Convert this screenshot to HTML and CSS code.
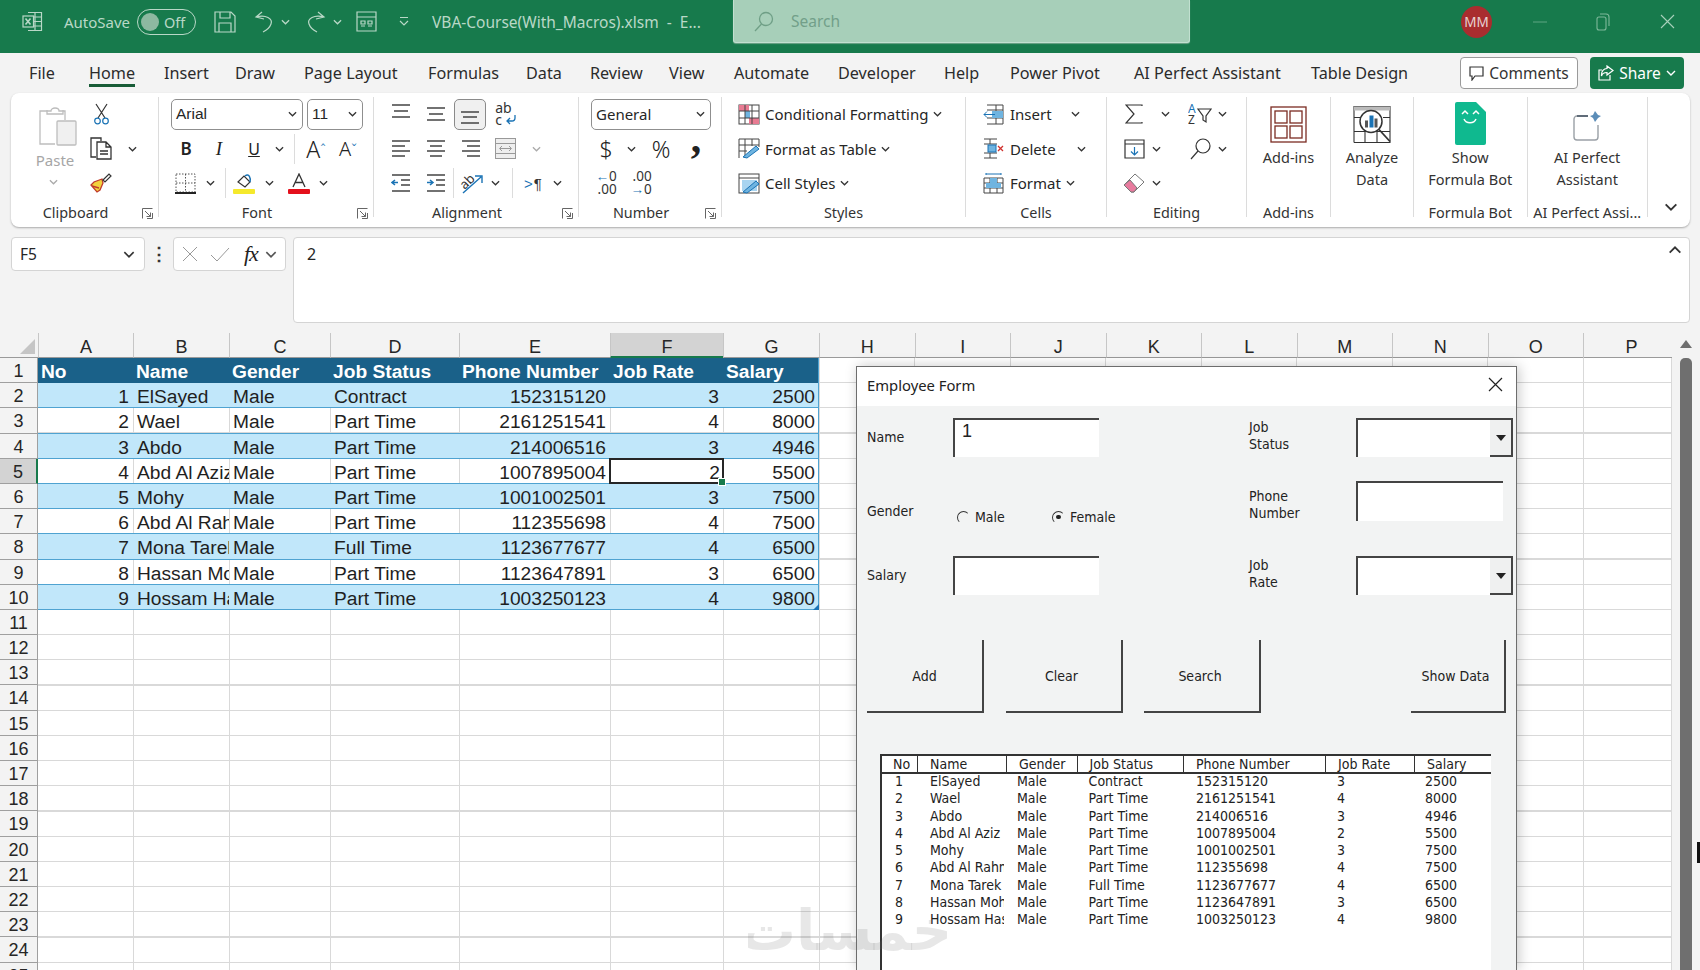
FILE: index.html
```html
<!DOCTYPE html>
<html lang="en">
<head>
<meta charset="utf-8">
<title>VBA-Course(With_Macros).xlsm - Excel</title>
<link rel="stylesheet" href="styles.css">
</head>
<body>
<svg class="defs" aria-hidden="true">
  <symbol id="chev" viewBox="0 0 10 6"><path d="M1 1l4 4 4-4" fill="none" stroke="currentColor" stroke-width="1.4"/></symbol>
  <symbol id="launch" viewBox="0 0 11 11"><path d="M.5 10.5v-10h10M4 .5M10.5 5v5.5H5M3 3l5.5 5.5M8.5 4.5v4h-4" fill="none" stroke="#666" stroke-width="1"/></symbol>
</svg>

<header class="titlebar">
  <svg class="t-ico" width="21" height="21" viewBox="0 0 21 21" fill="none" stroke="#b9d8c7" stroke-width="1.2"><path d="M6 1.5h13.5v18H6M6 6h13.5M6 10.5h13.5M6 15h13.5M13 1.5v18"/><rect x="1" y="5" width="10.500" height="11" fill="#177a4c"/><path d="M3.500 7.500l5 6M8.500 7.500l-5 6" stroke-width="1.600"/></svg>
  <span class="t-text autosave">AutoSave</span>
  <span class="toggle"><i class="knob"></i><span>Off</span></span>
  <svg width="22" height="22" viewBox="0 0 22 22" fill="none" stroke="#b9d8c7" stroke-width="1.200"><path d="M1 1h16l4 4v16H1zM6 1v6h10V1M5 21v-9h12v9"/></svg>
  <svg width="21" height="22" viewBox="0 0 21 22" fill="none" stroke="#b9d8c7" stroke-width="1.200"><path d="M8 1L2 6l8 2M2 6c10-3 17 2 15 7-1 3-4 6-8 8"/></svg>
  <svg class="t-chev"><use href="#chev"/></svg>
  <svg width="21" height="22" viewBox="0 0 21 22" fill="none" stroke="#b9d8c7" stroke-width="1.200"><path d="M13 1l6 5-8 2M19 6C9 3 2 8 4 13c1 3 4 6 8 8"/></svg>
  <svg class="t-chev"><use href="#chev"/></svg>
  <svg width="21" height="21" viewBox="0 0 21 21" fill="none" stroke="#b9d8c7" stroke-width="1.200"><path d="M1 1h19v19H1zM1 6h19M5 10h4v3H5zM12 10h4v3h-4zM5 15h4M12 15h4"/></svg>
  <svg class="t-qat" width="10" height="11" viewBox="0 0 10 11" fill="none" stroke="#b9d8c7" stroke-width="1.200"><path d="M1 1.500h8M1 5l4 4 4-4"/></svg>
  <span class="t-text">VBA-Course(With_Macros).xlsm &nbsp;-&nbsp; E...</span>
  <div class="searchbox">
    <svg width="20" height="21" viewBox="0 0 20 21" fill="none" stroke="#6f9f86" stroke-width="1.300"><circle cx="12" cy="8" r="6.500"/><path d="M7.500 13L1 20"/></svg>
    <span>Search</span>
  </div>
  <span class="avatar">MM</span>
  <svg width="14" height="2" viewBox="0 0 14 2"><path d="M0 1h14" stroke="#5fa582"/></svg>
  <svg width="14" height="20" viewBox="0 0 14 20" fill="none" stroke="#7fb89a" stroke-width="1.100"><rect x="1" y="5" width="9" height="13" rx="2"/><path d="M4 2h6a3 3 0 0 1 3 3v9"/></svg>
  <svg width="15" height="15" viewBox="0 0 15 15" fill="none" stroke="#a9d0bb" stroke-width="1.100"><path d="M1 1l13 13M14 1L1 14"/></svg>
</header>

<nav class="tabrow">
  <div class="tabs">
    <span class="tab">File</span><span class="tab active">Home</span><span class="tab">Insert</span><span class="tab">Draw</span><span class="tab">Page Layout</span><span class="tab">Formulas</span><span class="tab">Data</span><span class="tab">Review</span><span class="tab">View</span><span class="tab">Automate</span><span class="tab">Developer</span><span class="tab">Help</span><span class="tab">Power Pivot</span><span class="tab">AI Perfect Assistant</span><span class="tab">Table Design</span>
  </div>
  <div class="tab-actions">
    <button class="btn-comments"><svg width="15" height="15" viewBox="0 0 15 15" fill="none" stroke="#333" stroke-width="1.200"><path d="M1 1h13v9H6l-3 4v-4H1z"/></svg>Comments</button>
    <button class="btn-share"><svg width="16" height="16" viewBox="0 0 16 16" fill="none" stroke="#fff" stroke-width="1.200"><path d="M9 1l6 4.500L9 10V7.500C5 7.500 4 9 3.500 11 3 6 6 3.500 9 3.500zM12 10v5H1V5h3"/></svg>Share<svg class="chev" width="10" height="6"><use href="#chev"/></svg></button>
  </div>
</nav>

<section class="ribbon">
  <!-- Clipboard -->
  <div class="group g-clip">
    <div class="body clip-body">
      <div class="paste">
        <svg width="38" height="40" viewBox="0 0 38 40" fill="none" stroke="#bdbdbd" stroke-width="1.300"><path d="M6 5h6c0-4 8-4 8 0h6v9M16 38H1V5h5"/><path d="M8 4v4h16V4" /><rect x="18" y="15" width="19" height="24" rx="1" fill="#f0f0f0"/></svg>
        <span class="paste-label">Paste</span>
        <svg class="chev light" width="9" height="6"><use href="#chev"/></svg>
      </div>
      <div class="clip-tools">
        <div class="row"><span class="c w28"><svg width="15" height="22" viewBox="0 0 15 22" fill="none" stroke="#333" stroke-width="1.200"><path d="M2 1l9 14M13 1L4 15"/><circle cx="3.500" cy="18" r="2.800" stroke="#1a73b5"/><circle cx="11.500" cy="18" r="2.800" stroke="#1a73b5"/></svg></span></div>
        <div class="row"><span class="c w28"><svg width="24" height="23" viewBox="0 0 24 23" fill="none" stroke="#333" stroke-width="1.300"><path d="M7 20H2V1h10v3"/><path d="M8 5h9l5 5v12H8zM17 5v5h5M11 14h8M11 17h8"/></svg></span><span class="c w34"><svg class="chev" width="9" height="6"><use href="#chev"/></svg></span></div>
        <div class="row"><span class="c w28"><svg width="22" height="20" viewBox="0 0 22 20"><path d="M12 6L4 9l-3 3 6 7 3-2 3-7z" fill="#f2d23c" stroke="#c0392b" stroke-width="1.300"/><path d="M2 13l7 2" stroke="#c0392b" stroke-width="1.500"/><path d="M13 7l6-6 2 2-6 6z" fill="#fff" stroke="#333" stroke-width="1.200"/></svg></span></div>
      </div>
    </div>
    <div class="label has-launch">Clipboard<svg class="launch" width="11" height="11"><use href="#launch"/></svg></div>
  </div>

  <!-- Font -->
  <div class="group g-font">
    <div class="body pad12">
      <div class="row gap4">
        <span class="select w132"><span class="arial">Arial</span><svg class="chev" width="9" height="6"><use href="#chev"/></svg></span>
        <span class="select w56"><span class="arial">11</span><svg class="chev" width="9" height="6"><use href="#chev"/></svg></span>
      </div>
      <div class="row">
        <span class="c w30 glyph bold">B</span>
        <span class="c w36 glyph ital">I</span>
        <span class="c w34 glyph under">U</span>
        <span class="c w16"><svg class="chev" width="9" height="6"><use href="#chev"/></svg></span>
        <span class="c w14"><i class="vsep"></i></span>
        <span class="c w30 glyph big">A<sup class="up">&#710;</sup></span>
        <span class="c w34 glyph mid">A<sup class="up">&#711;</sup></span>
      </div>
      <div class="row">
        <span class="c w28"><svg width="21" height="21" viewBox="0 0 21 21" fill="none" stroke="#555" stroke-width="1" stroke-dasharray="1.500 1.500"><path d="M1 1h19v18H1zM10.500 1v18M1 10h19"/><path d="M0 20h21" stroke="#222" stroke-width="2" stroke-dasharray="none"/></svg></span>
        <span class="c w22"><svg class="chev" width="9" height="6"><use href="#chev"/></svg></span>
        <span class="c w8"><i class="vsep"></i></span>
        <span class="c w30"><svg width="22" height="21" viewBox="0 0 22 21" fill="none"><path d="M5 9l6-6 6 6-5 5z" stroke="#333" stroke-width="1.200"/><path d="M12 3c4-3 6 2 5 6" stroke="#1a73b5" stroke-width="1.500"/><rect y="16" width="22" height="5" rx="1" fill="#f5e92c"/></svg></span>
        <span class="c w20"><svg class="chev" width="9" height="6"><use href="#chev"/></svg></span>
        <span class="c w40"><svg width="22" height="21" viewBox="0 0 22 21" fill="none"><path d="M5 14L11 1l6 13M7 9.500h8" stroke="#333" stroke-width="1.300"/><rect y="16" width="22" height="5" rx="1" fill="#e4101c"/></svg></span>
        <span class="c w8"><svg class="chev" width="9" height="6"><use href="#chev"/></svg></span>
      </div>
    </div>
    <div class="label has-launch">Font<svg class="launch" width="11" height="11"><use href="#launch"/></svg></div>
  </div>

  <!-- Alignment -->
  <div class="group g-align">
    <div class="body pad9">
      <div class="row">
        <span class="c w35"><svg class="lines" width="20" height="22" viewBox="0 0 20 22"><path d="M1 2h18M3 8h14M1 14h18"/></svg></span>
        <span class="c w35"><svg class="lines" width="20" height="22" viewBox="0 0 20 22"><path d="M1 5h18M3 11h14M1 17h18"/></svg></span>
        <span class="c w34"><span class="selected"><svg class="lines" width="20" height="22" viewBox="0 0 20 22"><path d="M1 9h18M3 14h14M1 20h18"/></svg></span></span>
        <span class="c w38 wrapglyph"><span>ab<br>c</span><svg width="11" height="11" viewBox="0 0 11 11" fill="none" stroke="#1a73b5" stroke-width="1.300"><path d="M9 1v3a3 3 0 0 1-3 3H1M4 4L1 7l3 3"/></svg></span>
      </div>
      <div class="row">
        <span class="c w35"><svg class="lines" width="20" height="20" viewBox="0 0 20 20"><path d="M1 2h18M1 7h13M1 12h18M1 17h13"/></svg></span>
        <span class="c w35"><svg class="lines" width="20" height="20" viewBox="0 0 20 20"><path d="M1 2h18M4 7h12M1 12h18M4 17h12"/></svg></span>
        <span class="c w35"><svg class="lines" width="20" height="20" viewBox="0 0 20 20"><path d="M1 2h18M6 7h13M1 12h18M6 17h13"/></svg></span>
        <span class="c w34"><svg width="21" height="21" viewBox="0 0 21 21" fill="#eee" stroke="#999"><rect x=".500" y=".500" width="20" height="20"/><path d="M.500 5.500h20M.500 15.500h20M5 10.500h11M7 8l-2.500 2.500L7 13M14 8l2.500 2.500L14 13" fill="none"/></svg></span>
        <span class="c w28"><svg class="chev light" width="9" height="6"><use href="#chev"/></svg></span>
      </div>
      <div class="row">
        <span class="c w35"><svg class="lines" width="20" height="20" viewBox="0 0 20 20"><path d="M1 2h18M10 7h9M10 12h9M1 18h18"/><path d="M7 9.500H1M4 7L1 9.500 4 12" stroke="#1a73b5"/></svg></span>
        <span class="c w35"><svg class="lines" width="20" height="20" viewBox="0 0 20 20"><path d="M1 2h18M10 7h9M10 12h9M1 18h18"/><path d="M1 9.500h6M4 7l3 2.500L4 12" stroke="#1a73b5"/></svg></span>
        <i class="vsep"></i>
        <span class="c w36"><svg width="24" height="24" viewBox="0 0 24 24" fill="none"><text class="svgab" transform="rotate(-45 9 12)" x="1" y="14">ab</text><path d="M3 22L21 6M15 5h7v7" stroke="#1a73b5" stroke-width="1.400"/></svg></span>
        <span class="c w10"><svg class="chev" width="9" height="6"><use href="#chev"/></svg></span>
        <span class="c w12"></span><i class="vsep"></i>
        <span class="c w40 rtl"><b>&gt;</b>&para;</span>
        <span class="c w8"><svg class="chev" width="9" height="6"><use href="#chev"/></svg></span>
      </div>
    </div>
    <div class="label has-launch">Alignment<svg class="launch" width="11" height="11"><use href="#launch"/></svg></div>
  </div>

  <!-- Number -->
  <div class="group g-number">
    <div class="body pad12">
      <div class="row"><span class="select w120"><span>General</span><svg class="chev" width="9" height="6"><use href="#chev"/></svg></span></div>
      <div class="row">
        <span class="c w30 glyph big2">$</span>
        <span class="c w20"><svg class="chev" width="9" height="6"><use href="#chev"/></svg></span>
        <span class="c w40 glyph big2">%</span>
        <span class="c w30 glyph comma">,</span>
      </div>
      <div class="row">
        <span class="c w30 decim"><span><b>&larr;</b>0<br>.00</span></span>
        <span class="c w40 decim"><span>.00<br><b>&rarr;</b>0</span></span>
      </div>
    </div>
    <div class="label has-launch">Number<svg class="launch" width="11" height="11"><use href="#launch"/></svg></div>
  </div>

  <!-- Styles -->
  <div class="group g-styles">
    <div class="body pad16">
      <div class="row gap5">
        <svg width="22" height="21" viewBox="0 0 22 21" fill="none" stroke="#444"><rect x="1" y="1" width="20" height="19"/><rect x="1" y="1" width="10" height="6" fill="#e87b92" stroke="none"/><rect x="11" y="14" width="10" height="6" fill="#e87b92" stroke="none"/><rect x="7" y="7" width="5" height="7" fill="#6fb4e0" stroke="none"/><path d="M1 7h20M1 14h20M7 1v19M14 1v19"/></svg>
        <span>Conditional Formatting</span><svg class="chev" width="9" height="6"><use href="#chev"/></svg>
      </div>
      <div class="row gap5">
        <svg width="22" height="21" viewBox="0 0 22 21" fill="none" stroke="#444"><path d="M1 20V1h20v8M1 7h20M1 13h8M7 1v19M14 1v7"/><path d="M5 19L18 8l3 3L9 20z" fill="#6fb4e0" stroke="#1a73b5"/></svg>
        <span>Format as Table</span><svg class="chev" width="9" height="6"><use href="#chev"/></svg>
      </div>
      <div class="row gap5">
        <svg width="22" height="21" viewBox="0 0 22 21" fill="none" stroke="#444"><rect x="1" y="1" width="20" height="19"/><path d="M1 5h20"/><rect x="4" y="7" width="15" height="11" fill="#a8d4f0" stroke="none"/><path d="M5 19L18 8l3 3L9 20z" fill="#6fb4e0" stroke="#1a73b5"/></svg>
        <span>Cell Styles</span><svg class="chev" width="9" height="6"><use href="#chev"/></svg>
      </div>
    </div>
    <div class="label">Styles</div>
  </div>

  <!-- Cells -->
  <div class="group g-cells">
    <div class="body pad17">
      <div class="row gap6">
        <svg width="21" height="21" viewBox="0 0 21 21" fill="none" stroke="#444"><path d="M4 1h16v19H4M4 6h16M4 14h16M13 1v19"/><rect x="9" y="7" width="11" height="7" fill="#6fb4e0" stroke="none"/><path d="M12 10.500H1M4 7.500l-3 3 3 3" stroke="#1a73b5"/></svg>
        <span class="w52">Insert</span><span class="c w14"><svg class="chev" width="9" height="6"><use href="#chev"/></svg></span>
      </div>
      <div class="row gap6">
        <svg width="21" height="21" viewBox="0 0 21 21" fill="none" stroke="#444"><path d="M1 1h13M1 6h13M1 15h13M1 20h13M7 1v5M7 15v5"/><rect x="5" y="7" width="8" height="7" fill="#6fb4e0" stroke="#1a73b5"/><path d="M15 8l5 5M20 8l-5 5" stroke="#d0312d" stroke-width="1.300"/></svg>
        <span class="w58">Delete</span><span class="c w14"><svg class="chev" width="9" height="6"><use href="#chev"/></svg></span>
      </div>
      <div class="row gap5">
        <svg class="ml-cell" width="21" height="22" viewBox="0 0 21 22" fill="none" stroke="#444"><path d="M1 6h19v15H1zM1 11h19M1 16h19M7 6v15M14 6v15"/><rect x="7" y="6" width="7" height="10" fill="#6fb4e0" stroke="none"/><rect x="3" y="11" width="15" height="5" fill="#6fb4e0" stroke="none"/><path d="M3 2h15M3 1v2M18 1v2" stroke="#1a73b5"/></svg>
        <span>Format</span><svg class="chev" width="9" height="6"><use href="#chev"/></svg>
      </div>
    </div>
    <div class="label">Cells</div>
  </div>

  <!-- Editing -->
  <div class="group g-edit">
    <div class="body pad15">
      <div class="row">
        <span class="c w24"><svg width="18" height="20" viewBox="0 0 18 20" fill="none" stroke="#333" stroke-width="1.200"><path d="M17 2V1H1l8 9-8 9h16v-1"/></svg></span>
        <span class="c w38"><svg class="chev" width="9" height="6"><use href="#chev"/></svg></span>
        <span class="c w32"><svg width="24" height="22" viewBox="0 0 24 22" fill="none"><text class="svgaz blue" x="0" y="10">A</text><text class="svgaz" x="0" y="21">Z</text><path d="M10 6h13l-5 7v6l-3-2v-4z" stroke="#333" stroke-width="1.200"/></svg></span>
        <span class="c w12"><svg class="chev" width="9" height="6"><use href="#chev"/></svg></span>
      </div>
      <div class="row">
        <span class="c w24"><svg width="21" height="20" viewBox="0 0 21 20" fill="none" stroke="#333" stroke-width="1.200"><path d="M1 1h19v18H1zM1 5h19"/><path d="M10.500 8v8M7 12.500l3.500 3.500 3.500-3.500" stroke="#1a73b5"/></svg></span>
        <span class="c w20"><svg class="chev" width="9" height="6"><use href="#chev"/></svg></span>
        <span class="c w18"></span>
        <span class="c w32"><svg width="21" height="22" viewBox="0 0 21 22" fill="none" stroke="#333" stroke-width="1.200"><circle cx="13" cy="8" r="7"/><path d="M8 13l-7 8"/></svg></span>
        <span class="c w12"><svg class="chev" width="9" height="6"><use href="#chev"/></svg></span>
      </div>
      <div class="row">
        <span class="c w24"><svg width="22" height="20" viewBox="0 0 22 20"><path d="M1 12L12 1l9 8-10 10h-3z" fill="#fff" stroke="#777"/><path d="M1 12l7 7h3l3-4-7-8z" fill="#e87b9e" stroke="#777"/></svg></span>
        <span class="c w20"><svg class="chev" width="9" height="6"><use href="#chev"/></svg></span>
      </div>
    </div>
    <div class="label">Editing</div>
  </div>

  <!-- Large buttons -->
  <div class="group g-addins">
    <div class="body big-btn">
      <svg width="37" height="37" viewBox="0 0 37 37" fill="none" stroke="#7b2c22" stroke-width="1.300"><rect x="1" y="1" width="35" height="35"/><rect x="5" y="5" width="12" height="12"/><rect x="20" y="5" width="12" height="12"/><rect x="5" y="20" width="12" height="12"/><rect x="20" y="20" width="12" height="12"/></svg>
      <span class="big-text">Add-ins</span>
    </div>
    <div class="label">Add-ins</div>
  </div>
  <div class="group g-analyze">
    <div class="body big-btn">
      <svg width="38" height="38" viewBox="0 0 38 38" fill="none" stroke="#333" stroke-width="1.100"><path d="M1 37V1h36v36H1M1 4h36M1 12h7M30 12h7M1 26h36M12 26v11M24 26v11" /><rect x="1" y="1" width="36" height="4" fill="#bbb" stroke="none"/><circle cx="18" cy="16" r="11" fill="#fff" stroke-width="1.500"/><path d="M26 24l11 12" stroke-width="1.800"/><rect x="12" y="15" width="3" height="7" fill="#555" stroke="none"/><rect x="16.500" y="10" width="4" height="12" fill="#1a73b5" stroke="none"/><rect x="21.500" y="13" width="3" height="9" fill="#555" stroke="none"/></svg>
      <span class="big-text">Analyze<br>Data</span>
    </div>
  </div>
  <div class="group g-bot">
    <div class="body big-btn top-tight">
      <svg width="31" height="43" viewBox="0 0 31 43"><path d="M2 0h19l10 10v31a2 2 0 0 1-2 2H2a2 2 0 0 1-2-2V2a2 2 0 0 1 2-2z" fill="#0fb98f"/><path d="M7 12l3-3 3 3M18 12l3-3 3 3M9 17c2 5 10 5 12 0" fill="none" stroke="#fff" stroke-width="1.500"/></svg>
      <span class="big-text">Show<br>Formula Bot</span>
    </div>
    <div class="label">Formula Bot</div>
  </div>
  <div class="group g-ai">
    <div class="body big-btn">
      <svg width="28" height="37" viewBox="0 0 28 37" fill="none"><path d="M15 10H4a3 3 0 0 0-3 3v18a3 3 0 0 0 3 3h18a3 3 0 0 0 3-3V19" stroke="#9aa0a6" stroke-width="1.400"/><path d="M4 10h11" stroke="#3d4d5c" stroke-width="1.400"/><path d="M22 5l3 4 3 1-3 2-3 4-2-4-3-2 3-1z" fill="#5b8db8"/></svg>
      <span class="big-text">AI Perfect<br>Assistant</span>
    </div>
    <div class="label">AI Perfect Assi...</div>
  </div>
  <div class="collapse"><svg width="14" height="8"><use href="#chev"/></svg></div>
</section>

<section class="fbar">
  <div class="namebox"><span>F5</span><svg class="chev" width="12" height="7"><use href="#chev"/></svg></div>
  <div class="dots">&#8942;</div>
  <div class="fxbox">
    <svg width="16" height="16" viewBox="0 0 16 16" fill="none" stroke="#999" stroke-width="1"><path d="M1 1l14 14M15 1L1 15"/></svg>
    <svg width="20" height="15" viewBox="0 0 20 15" fill="none" stroke="#999" stroke-width="1"><path d="M1 8l6 6L19 1"/></svg>
    <span class="fx">fx</span>
    <svg class="chev" width="12" height="7"><use href="#chev"/></svg>
  </div>
  <div class="finput"><span>2</span><svg class="chev-up" width="14" height="8"><use href="#chev"/></svg></div>
</section>

<section class="sheet">
  <div class="colheads">
    <div class="corner"><i></i></div>
    <div class="ch">A</div><div class="ch">B</div><div class="ch">C</div><div class="ch">D</div><div class="ch">E</div><div class="ch sel">F</div><div class="ch">G</div><div class="ch">H</div><div class="ch">I</div><div class="ch">J</div><div class="ch">K</div><div class="ch">L</div><div class="ch">M</div><div class="ch">N</div><div class="ch">O</div><div class="ch last">P</div>
  </div>
  <div class="sheet-body">
    <div class="rowheads">
      <div>1</div><div>2</div><div>3</div><div>4</div><div class="sel">5</div><div>6</div><div>7</div><div>8</div><div>9</div><div>10</div><div>11</div><div>12</div><div>13</div><div>14</div><div>15</div><div>16</div><div>17</div><div>18</div><div>19</div><div>20</div><div>21</div><div>22</div><div>23</div><div>24</div><div>25</div>
    </div>
    <div class="grid">
      <div class="tr th"><span>No</span><span>Name</span><span>Gender</span><span>Job Status</span><span>Phone Number</span><span>Job Rate</span><span>Salary</span></div>
      <div class="tr band"><span class="n">1</span><span>ElSayed</span><span>Male</span><span>Contract</span><span class="n">152315120</span><span class="n">3</span><span class="n">2500</span></div>
      <div class="tr"><span class="n">2</span><span>Wael</span><span>Male</span><span>Part Time</span><span class="n">2161251541</span><span class="n">4</span><span class="n">8000</span></div>
      <div class="tr band"><span class="n">3</span><span>Abdo</span><span>Male</span><span>Part Time</span><span class="n">214006516</span><span class="n">3</span><span class="n">4946</span></div>
      <div class="tr"><span class="n">4</span><span>Abd Al Aziz</span><span>Male</span><span>Part Time</span><span class="n">1007895004</span><span class="n active">2</span><span class="n">5500</span></div>
      <div class="tr band"><span class="n">5</span><span>Mohy</span><span>Male</span><span>Part Time</span><span class="n">1001002501</span><span class="n">3</span><span class="n">7500</span></div>
      <div class="tr"><span class="n">6</span><span>Abd Al Rahman</span><span>Male</span><span>Part Time</span><span class="n">112355698</span><span class="n">4</span><span class="n">7500</span></div>
      <div class="tr band"><span class="n">7</span><span>Mona Tarek</span><span>Male</span><span>Full Time</span><span class="n">1123677677</span><span class="n">4</span><span class="n">6500</span></div>
      <div class="tr"><span class="n">8</span><span>Hassan Mohamed</span><span>Male</span><span>Part Time</span><span class="n">1123647891</span><span class="n">3</span><span class="n">6500</span></div>
      <div class="tr band end"><span class="n">9</span><span>Hossam Hassan</span><span>Male</span><span>Part Time</span><span class="n">1003250123</span><span class="n">4</span><span class="n">9800</span></div>
    </div>
    <div class="vscroll"><i class="thumb"></i></div>
  </div>
</section>

<aside class="dialog">
  <div class="dlg-title"><span>Employee Form</span><svg width="15" height="15" viewBox="0 0 15 15" fill="none" stroke="#222" stroke-width="1.200"><path d="M1 1l13 13M14 1L1 14"/></svg></div>
  <div class="dlg-body">
    <div class="form">
      <label class="f-label">Name</label>
      <div class="inp name-inp">1</div>
      <div></div>
      <label class="f-label two">Job<br>Status</label>
      <div class="inp combo"><span class="drop"><i></i></span></div>

      <label class="f-label low">Gender</label>
      <div class="radios">
        <span class="radio"><i class="dot"></i>Male</span>
        <span class="radio"><i class="dot on"></i>Female</span>
      </div>
      <label class="f-label ph">Phone<br>Number</label>
      <div class="inp narrow"></div>

      <label class="f-label">Salary</label>
      <div class="inp"></div>
      <div></div>
      <label class="f-label jr">Job<br>Rate</label>
      <div class="inp combo"><span class="drop"><i></i></span></div>
    </div>
    <div class="actions">
      <button class="vb w117">Add</button>
      <button class="vb w117 tweak">Clear</button>
      <button class="vb w117 tweak">Search</button>
      <button class="vb w95 tweak">Show Data</button>
    </div>
    <div class="listbox">
      <div class="lb-head"><span>No</span><span>Name</span><span>Gender</span><span>Job Status</span><span>Phone Number</span><span>Job Rate</span><span>Salary</span></div>
      <div class="lb-row"><span>1</span><span>ElSayed</span><span>Male</span><span>Contract</span><span>152315120</span><span>3</span><span>2500</span></div>
      <div class="lb-row"><span>2</span><span>Wael</span><span>Male</span><span>Part Time</span><span>2161251541</span><span>4</span><span>8000</span></div>
      <div class="lb-row"><span>3</span><span>Abdo</span><span>Male</span><span>Part Time</span><span>214006516</span><span>3</span><span>4946</span></div>
      <div class="lb-row"><span>4</span><span>Abd Al Aziz</span><span>Male</span><span>Part Time</span><span>1007895004</span><span>2</span><span>5500</span></div>
      <div class="lb-row"><span>5</span><span>Mohy</span><span>Male</span><span>Part Time</span><span>1001002501</span><span>3</span><span>7500</span></div>
      <div class="lb-row"><span>6</span><span>Abd Al Rahman</span><span>Male</span><span>Part Time</span><span>112355698</span><span>4</span><span>7500</span></div>
      <div class="lb-row"><span>7</span><span>Mona Tarek</span><span>Male</span><span>Full Time</span><span>1123677677</span><span>4</span><span>6500</span></div>
      <div class="lb-row"><span>8</span><span>Hassan Mohamed</span><span>Male</span><span>Part Time</span><span>1123647891</span><span>3</span><span>6500</span></div>
      <div class="lb-row"><span>9</span><span>Hossam Hassan</span><span>Male</span><span>Part Time</span><span>1003250123</span><span>4</span><span>9800</span></div>
    </div>
  </div>
</aside>

<div class="watermark" dir="rtl" lang="ar">خمسات</div>
<i class="cursor"></i>
</body>
</html>
```
FILE: styles.css
```css
*{box-sizing:border-box}
html,body{margin:0;padding:0}
html{overflow:hidden}
body{width:1700px;height:970px;overflow:hidden;position:relative;background:#f3f3f3;color:#262626;font-family:"Noto Sans","Open Sans",sans-serif;font-size:15px}
.defs{position:absolute;width:0;height:0}
i{display:block}
button{font:inherit;color:inherit;cursor:default}
svg{display:block;flex:none}
.chev{color:#333;flex:none}
.chev.light{color:#aaa}

/* Title bar */
.titlebar{height:53px;background:#177a4c;padding:0 0 10px 22px;display:grid;grid-template-columns:42px 73px 77px 40px 26px 25px 27px 24px 43px 33px 301px 728px 72px 63px 64px 40px;align-items:center;color:#b9d8c7;font-size:15.500px}
.t-text{white-space:nowrap;font-size:15.500px}
.autosave{font-size:15px}
.t-chev{width:9px;height:6px;color:#b9d8c7;margin-left:1px}
.toggle{width:59px;height:26px;border:1.500px solid #b9d8c7;border-radius:13px;display:flex;align-items:center;gap:5px;padding-left:3px;font-size:14.500px;color:#b9d8c7}
.knob{width:18px;height:18px;border-radius:50%;background:#8db9a1}
.searchbox{width:457px;height:43px;align-self:start;background:#a7cfb9;border:1px solid #c2e0d0;border-top:0;border-radius:0 0 3px 3px;box-shadow:0 1px 1px #6fa58a;display:flex;align-items:center;gap:17px;padding-left:20px;color:#729f89;font-size:15.500px}
.avatar{width:31px;height:32px;border-radius:50%;background:#a92d2f;color:#e8d2d2;font-size:13.500px;display:flex;align-items:center;justify-content:center}

/* Tabs */
.tabrow{height:40px;display:flex;align-items:flex-start;padding:4px 16px 0 29px}
.tabs{display:grid;grid-template-columns:60px 75px 71px 69px 124px 98px 64px 79px 65px 104px 106px 66px 124px 177px auto;justify-items:start}
.tab{height:30px;line-height:26px;padding-top:3px;border-bottom:3px solid transparent;font-size:16.200px;white-space:nowrap;color:#2b2b2b}
.tab.active{border-bottom-color:#185c37}
.tab-actions{margin-left:auto;display:flex;gap:12px}
.btn-comments,.btn-share{height:32px;border-radius:4px;display:flex;align-items:center;padding:0;font-size:15.500px;gap:5px;justify-content:center}
.btn-comments{width:118px;background:#fff;border:1px solid #9a9a9a;color:#333}
.btn-share{width:94px;background:#177a4c;border:0;color:#fff}
.btn-share .chev{color:#fff}

/* Ribbon */
.ribbon{height:134px;margin:0 10px 0 11px;background:#fff;border-radius:8px;box-shadow:0 1px 2px rgba(0,0,0,.3);display:flex;padding-top:4px}
.group{height:120px;border-right:1.500px solid #dcdcdc;position:relative;flex:none}
.g-clip{width:148px}.g-font{width:215px}.g-align{width:205px}.g-number{width:143px}.g-styles{width:244px}.g-cells{width:141px}.g-edit{width:140px}.g-addins{width:84px}.g-analyze{width:83px}.g-bot{width:113.500px}.g-ai{width:120.500px}
.body{height:106px}
.label{position:absolute;left:0;right:0;top:106px;height:20px;line-height:20px;text-align:center;font-size:14.400px;color:#333;white-space:nowrap}
.label.has-launch{padding-right:18px}
.launch{position:absolute;right:5px;top:5px}
.pad9{padding-left:9px}.pad12{padding-left:12px}.pad15{padding-left:15px}.pad16{padding-left:16px}.pad17{padding-left:17px}
.row{height:34.500px;display:flex;align-items:center;white-space:nowrap}
.gap4{gap:4px}.gap5{gap:5px}.gap6{gap:6px}
.ml-cell{margin-right:1px}
.c{display:flex;align-items:center;justify-content:center;flex:none;height:100%}
.w8{width:8px}.w10{width:10px}.w12{width:12px}.w14{width:14px}.w16{width:16px}.w18{width:18px}.w20{width:20px}.w22{width:22px}.w24{width:24px}.w28{width:28px}.w30{width:30px}.w32{width:32px}.w34{width:34px}.w35{width:35px}.w36{width:36px}.w38{width:38px}.w40{width:40px}.w52{width:52px}.w58{width:58px}
.w56{width:56px}.w120{width:120px}.w132{width:132px}
.vsep{width:1px;height:30px;background:#dcdcdc;flex:none}
.select{height:31px;border:1px solid #8f8f8f;border-radius:5px;display:flex;align-items:center;justify-content:space-between;padding:0 5px 0 4px;font-size:15px}
.arial{font-family:"Liberation Sans",Arial,sans-serif;font-size:15.500px}
.glyph{font-family:"Noto Sans",sans-serif;color:#222}
.bold{font-weight:600;font-size:17px}
.ital{font-style:italic;font-family:"Liberation Serif",serif;font-size:19px}
.under{font-size:16px;text-decoration:underline}
.big{font-size:23px;font-weight:300}.mid{font-size:20px;font-weight:300}
.up{font-size:15px;line-height:0;color:#1a73b5;vertical-align:8px}
.big2{font-size:23px;font-weight:300}
.comma{font-size:42px;font-weight:700;line-height:1;font-family:"Liberation Serif",serif;padding-bottom:22px}
.selected{width:32px;height:31px;border:1px solid #8a8a8a;border-radius:5px;background:#f0f0f0;display:flex;align-items:center;justify-content:center}
.lines{fill:none;stroke:#444;stroke-width:1.500}
.wrapglyph{gap:0;align-items:center;font-size:14px;line-height:12px;color:#333}
.wrapglyph svg{align-self:center;margin-top:10px;margin-left:-6px}
.wrapglyph span{text-align:left}
.svgab{font-size:13px;fill:#333;font-family:"Noto Sans",sans-serif}
.svgaz{font-size:12px;fill:#333;font-family:"Noto Sans",sans-serif}
.svgaz.blue{fill:#1a73b5}
.rtl{font-size:15px;color:#333;gap:1px;font-family:"Liberation Sans",sans-serif}
.rtl b{color:#1a73b5;font-weight:400}
.decim{font-size:13.500px;line-height:13px;color:#333;text-align:right}
.decim b{color:#1a73b5;font-weight:400}
.clip-body{display:flex}
.paste{width:76px;padding:9px 0 0 12px;display:flex;flex-direction:column;align-items:center}
.paste svg:first-child{margin-left:6px}
.paste-label{color:#a6a6a6;font-size:15px;margin-top:4px;line-height:20px}
.paste .chev{margin-top:9px;margin-left:-4px}
.big-btn{display:flex;flex-direction:column;align-items:center;padding-top:6px}
.big-btn.top-tight{padding-top:5px}
.big-btn svg{height:43px;margin-bottom:1px}
.big-btn.top-tight svg{margin-bottom:2px}
.big-text{text-align:center;font-size:14.500px;line-height:21.700px;color:#333;white-space:nowrap}
.collapse{flex:1;display:flex;align-items:flex-end;justify-content:center;height:114px;color:#333;padding-left:3px}

/* Formula bar */
.fbar{display:flex;margin-top:10px;padding-left:11px;align-items:flex-start}
.namebox,.fxbox,.finput{background:#fff;border:1px solid #d4d4d4;border-radius:4px}
.namebox{width:134px;height:34px;display:flex;align-items:center;justify-content:space-between;padding:0 9px 0 8px;font-size:15.500px}
.dots{width:28px;height:34px;line-height:32px;text-align:center;font-size:18px;font-weight:700;color:#333}
.fxbox{width:113px;height:34px;display:flex;align-items:center;padding-left:8px;gap:12px}
.fx{font-family:"Liberation Serif",serif;font-style:italic;font-size:22px;color:#222;margin-left:2px;letter-spacing:-1px}
.fxbox .chev{margin-left:-5px;color:#555}
.finput{width:1397px;height:86px;margin-left:7px;padding:5px 7px 0 13px;display:flex;justify-content:space-between;font-size:16px}
.chev-up{color:#333;transform:rotate(180deg);margin-top:3px}

/* Sheet */
.sheet{margin-top:10px}
.colheads{height:25px;display:grid;grid-template-columns:38px 95px 96px 101px 129px 151px 113px 96px 95.5px 95.5px 95.5px 95.5px 95.5px 95.5px 95.5px 95.5px 96px;width:1680px}
.corner{border-bottom:1px solid #9a9a9a;position:relative}
.corner i{position:absolute;right:3px;bottom:3px;width:0;height:0;border-left:15px solid transparent;border-bottom:15px solid #c5c5c5}
.ch{border-left:1px solid #c6c6c6;border-bottom:1px solid #9a9a9a;text-align:center;font:18px/28px "Liberation Sans",sans-serif;color:#262626;overflow:hidden}
.ch.sel{background:#d3d3d3;border-bottom:2px solid #177a4c}
.ch.last{border-bottom:0;background:linear-gradient(#9a9a9a,#9a9a9a) 0 100%/88px 1px no-repeat}
.sheet-body{display:flex;height:612px;overflow:hidden;position:relative}
.rowheads{width:38px;flex:none;height:612px;overflow:hidden}
.rowheads div{height:25.200px;text-align:center;border-bottom:1px solid #9f9f9f;border-right:1px solid #9f9f9f;font:18px/27px "Liberation Sans",sans-serif;color:#262626;overflow:hidden}
.rowheads .sel{background:#d3d3d3;border-right:2px solid #177a4c}
.grid{width:1634px;flex:none;height:612px;background-color:#fff;
 background-image:repeating-linear-gradient(to bottom,transparent 0,transparent 24px,#d9d9d9 24px,#d9d9d9 25.200px),
 linear-gradient(#d9d9d9,#d9d9d9),linear-gradient(#d9d9d9,#d9d9d9),linear-gradient(#d9d9d9,#d9d9d9),linear-gradient(#d9d9d9,#d9d9d9),linear-gradient(#d9d9d9,#d9d9d9),linear-gradient(#d9d9d9,#d9d9d9),linear-gradient(#d9d9d9,#d9d9d9),linear-gradient(#d9d9d9,#d9d9d9),linear-gradient(#d9d9d9,#d9d9d9),linear-gradient(#d9d9d9,#d9d9d9),linear-gradient(#d9d9d9,#d9d9d9),linear-gradient(#d9d9d9,#d9d9d9),linear-gradient(#d9d9d9,#d9d9d9),linear-gradient(#d9d9d9,#d9d9d9),linear-gradient(#d9d9d9,#d9d9d9),linear-gradient(#d9d9d9,#d9d9d9);
 background-size:100% 100%,1px 100%,1px 100%,1px 100%,1px 100%,1px 100%,1px 100%,1px 100%,1px 100%,1px 100%,1px 100%,1px 100%,1px 100%,1px 100%,1px 100%,1px 100%,1px 100%;
 background-position:0 0,95px 0,191px 0,292px 0,421px 0,572px 0,685px 0,781px 0,876px 0,972px 0,1067px 0,1163px 0,1258px 0,1354px 0,1449px 0,1545px 0,1633px 0;
 background-repeat:no-repeat}
.tr{width:781px;height:25.200px;display:grid;grid-template-columns:95px 96px 101px 129px 151px 113px 96px;grid-template-rows:1fr;border-bottom:1.200px solid #4fa3d1;border-right:1px solid #4fa3d1;font:19.200px/27px "Liberation Sans",sans-serif;color:#1f1f1f}
.tr span{overflow:hidden;white-space:nowrap;padding-left:4px;min-height:0}
.tr .n{text-align:right;padding:0 4px 0 0}
.tr.band{background:#c1e7fa}
.th{background:#1a6189;color:#fff;font-weight:700;border-bottom:0}
.th span{padding-left:3px}
.tr .active{outline:2px solid #262626;outline-offset:-1px;position:relative;overflow:visible;padding-right:3px}
.tr .active::after{content:"";position:absolute;right:-3px;bottom:-3px;width:6px;height:6px;background:#177a4c;border:1px solid #fff}
.tr.end{position:relative}
.tr.end::after{content:"";position:absolute;right:-1px;bottom:-1px;width:0;height:0;border-left:6px solid transparent;border-bottom:6px solid #1a73b5}
.vscroll{width:28px;padding-left:8px}
.thumb{width:12px;height:615px;background:#6f6f6f;border-radius:5px 5px 0 0}
.sheet::before{content:"";position:absolute;left:1680px;top:340px;width:0;height:0;border:6px solid transparent;border-top:0;border-bottom:8px solid #6f6f6f}

/* Dialog */
.dialog{position:absolute;left:856px;top:366px;width:661px;height:604px;overflow:hidden;background:#f2f3f3;border:1px solid #6d6d6d;border-bottom:0;box-shadow:2px 0 12px rgba(0,0,0,.22);font-family:"DejaVu Sans",sans-serif;font-stretch:condensed;font-size:14px;color:#222}
.dlg-title{height:39px;background:#fff;display:flex;align-items:center;justify-content:space-between;padding:0 13px 4px 10px;font-size:14.800px;font-family:"Noto Sans",sans-serif;font-stretch:normal}
.dlg-body{padding:12px 0 0 10px}
.form{display:grid;grid-template-columns:86px 146px 150px 107px 157px;grid-template-rows:39px 40px 50px;row-gap:24px}
.form>:nth-child(n+10){margin-top:11px}
.f-label{align-self:center;line-height:17px}
.f-label.low{align-self:end;margin-bottom:1px}
.f-label.two{margin-top:-4px}
.f-label.ph{margin-top:7px}
.form>.f-label.jr{margin-top:7px}
.inp{background:#fff;border-top:2px solid #444;border-left:2px solid #444;position:relative}
.name-inp{font:18px/20px "Liberation Sans",sans-serif;padding:1px 0 0 7px}
.inp.narrow{width:147px}
.drop{position:absolute;right:0;top:-2px;bottom:0;width:23px;background:#eff0f0;border-top:2px solid #444;border-right:2px solid #444;border-bottom:2px solid #444;display:flex;align-items:center;justify-content:center}
.drop i{width:0;height:0;border:5px solid transparent;border-bottom:0;border-top:6px solid #222}
.radios{grid-column:2 / span 2;display:flex;align-self:end;margin-bottom:-4px;padding-left:4px}
.radio{width:95px;display:flex;align-items:center;gap:5px}
.dot{width:13px;height:13px;border-radius:50%;border:1.500px solid transparent;border-top-color:#333;border-left-color:#333;position:relative}
.dot.on::after{content:"";position:absolute;left:3px;top:3px;width:4.500px;height:4.500px;border-radius:50%;background:#222}
.actions{display:flex;gap:21.500px;margin-top:45px}
.vb{height:73px;background:transparent;border:0;border-right:2px solid #444;border-bottom:2px solid #444;padding:0;font-size:14px;font-family:"DejaVu Sans",sans-serif;font-stretch:condensed}
.vb.tweak{padding-right:3px}
.w117{width:117px}
.w95{width:95px;margin-left:128px}
.listbox{width:611px;height:216px;margin:41px 0 0 13px;background:#fff;border-top:2px solid #333;border-left:2px solid #333}
.lb-head,.lb-row{display:grid;grid-template-columns:36px 89px 70.6px 106.4px 142px 89px 75px}
.lb-head{height:18px;border-bottom:2px solid #333;line-height:17px}
.lb-head span{white-space:nowrap;overflow:hidden;border-right:1px solid #333;padding-left:12px}
.lb-head span:first-child{padding-left:11px}
.lb-head span:last-child{border-right:0}
.lb-row{height:17.300px;line-height:17px}
.lb-row:nth-child(2){margin-top:-1px}
.lb-row span{white-space:nowrap;overflow:hidden;padding-left:11px}
.lb-row span:first-child{padding-left:13px}
.lb-row span:nth-child(2){padding-left:12px;margin-right:3px}
.lb-row span:nth-child(3){padding-left:10px}
.lb-row span:nth-child(5){padding-left:12px}
.lb-row span:nth-child(7){padding-left:10px}

/* Overlays */
.watermark{position:absolute;left:748px;top:886px;width:204px;text-align:center;font:700 56px/90px "DejaVu Sans",sans-serif;color:rgba(110,110,110,.17);pointer-events:none;white-space:nowrap;overflow:hidden;height:84px}
.cursor{position:absolute;left:1697px;top:842px;width:3px;height:21px;background:#111}
```
